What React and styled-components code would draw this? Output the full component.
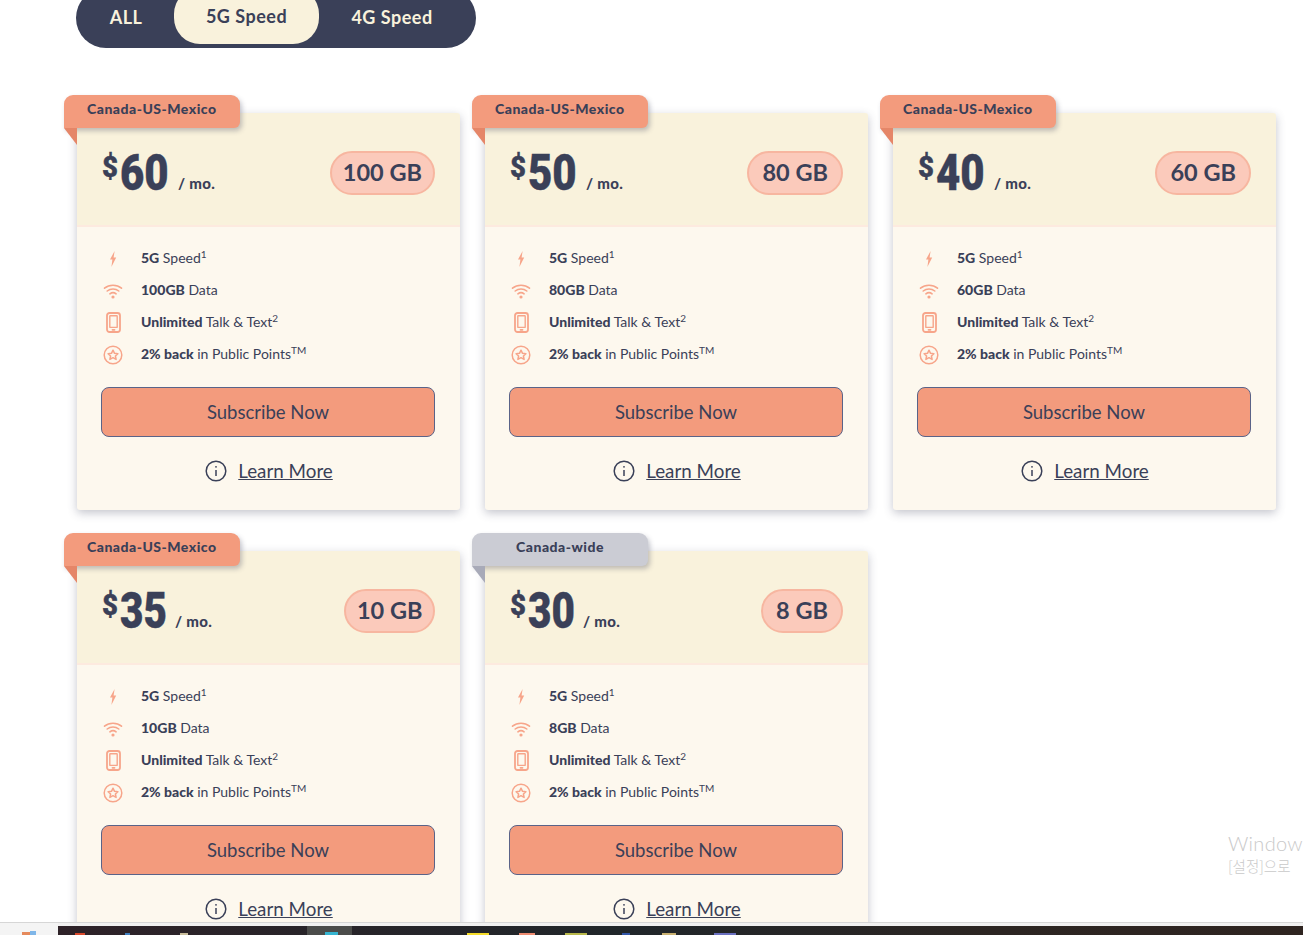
import React from 'react'
import styled, { createGlobalStyle } from 'styled-components'

const navy = '#3a4058'
const salmon = '#f39b7d'
const font = `'Lato', 'Noto Sans', sans-serif`

const GlobalStyle = createGlobalStyle`
  html, body {
    margin: 0;
    padding: 0;
    height: 100%;
    overflow: hidden;
    background: #fff;
  }
  * { box-sizing: border-box; }
`

const Screen = styled.div`
  height: 935px;
  display: flex;
  flex-direction: column;
  font-family: ${font};
  color: ${navy};
  position: relative;
`

const Page = styled.main`
  height: 922px;
  flex: none;
  overflow: hidden;
  padding: 0 0 0 64px;
`

const Tabs = styled.nav`
  width: 400px;
  height: 60px;
  margin: -12px 0 65px 12px;
  padding: 0 0 4px 8px;
  background: ${navy};
  border-radius: 30px;
  display: flex;
  align-items: stretch;
`

const Tab = styled.button`
  width: ${p => p.$width}px;
  padding: ${p => (p.$active ? 0 : 2)}px ${p => p.$shift || 0}px 0 0;
  margin: ${p => (p.$active ? '0 32px 0 0' : '0')};
  border: 0;
  border-radius: 26px;
  background: ${p => (p.$active ? '#f9f2dc' : 'transparent')};
  color: ${p => (p.$active ? navy : '#f9f2dc')};
  font: 700 18px ${font};
  letter-spacing: 0.5px;
  white-space: nowrap;
`

const Grid = styled.div`
  display: grid;
  grid-template-columns: repeat(3, 383px);
  gap: 41px 25px;
  margin-left: 13px;
`

const Card = styled.article`
  position: relative;
  height: 397px;
  background: #fdf8ee;
  border-radius: 3px;
  box-shadow: 0 3px 10px rgba(58, 64, 88, 0.3);
`

const Ribbon = styled.div`
  position: absolute;
  left: -13px;
  top: -18px;
  width: 176px;
  height: 33px;
  background: ${p => (p.$grey ? '#cbccd4' : salmon)};
  border-radius: 9px 9px 6px 0;
  box-shadow: 2px 3px 5px rgba(58, 64, 88, 0.3);
  font-size: 14px;
  font-weight: 900;
  letter-spacing: 0.5px;
  line-height: 28px;
  text-align: ${p => (p.$grey ? 'center' : 'left')};
  padding-left: ${p => (p.$grey ? '0' : '23px')};

  &::after {
    content: '';
    position: absolute;
    left: 0;
    top: 33px;
    border-style: solid;
    border-width: 0 13px 17px 0;
    border-color: transparent;
    border-right-color: ${p => (p.$grey ? '#a8aab8' : '#e58668')};
  }
`

const Head = styled.header`
  height: 114px;
  padding: 38px 25px 0;
  background: #f9f2dc;
  border-bottom: 2px solid #fdeadf;
  border-radius: 3px 3px 0 0;
  display: flex;
  justify-content: space-between;
  align-items: flex-start;
`

const Price = styled.div`
  display: flex;
  align-items: flex-start;
`

const Dollar = styled.span`
  display: inline-block;
  width: 18px;
  margin-top: 1px;
  font-family: 'Roboto', sans-serif;
  font-size: 30px;
  font-weight: 900;
  line-height: 30px;
  transform: scaleX(0.92);
  transform-origin: left;
  -webkit-text-stroke: 0.4px ${navy};
`

const Amount = styled.span`
  display: inline-block;
  font-family: 'Roboto', sans-serif;
  font-size: 50px;
  font-weight: 900;
  line-height: 44px;
  margin-right: -9px;
  transform: scaleX(${p => p.$scale});
  transform-origin: left;
  -webkit-text-stroke: 0.4px ${navy};
`

const Per = styled.span`
  margin: 23px 0 0 ${p => p.$gap}px;
  font-size: 15px;
  font-weight: 900;
  letter-spacing: 0.3px;
`

const Data = styled.div`
  height: 44px;
  padding: 0 ${p => p.$pad}px;
  background: #fbcabb;
  border: 2px solid #f7b6a0;
  border-radius: 22px;
  font-size: 23.5px;
  font-weight: 700;
  line-height: 38px;
`

const Features = styled.ul`
  list-style: none;
  margin: 0;
  padding: 15px 25px 0 24px;
`

const Feature = styled.li`
  height: 32px;
  display: flex;
  align-items: center;
  gap: 16px;
  font-size: 14px;
  color: ${navy};

  b { font-weight: 900; }
  sup { font-size: 10px; line-height: 0; vertical-align: 5px; }
  > span:last-child { margin-top: -2px; }
`

const IconBox = styled.span`
  width: 24px;
  display: flex;
  justify-content: center;
  color: #f7a58a;
  margin-top: 1px;
`

const Subscribe = styled.button`
  display: block;
  width: 334px;
  height: 50px;
  margin: 17px 0 0 24px;
  background: ${salmon};
  border: 1px solid #5a6388;
  border-radius: 8px;
  color: ${navy};
  font: 400 18.5px ${font};
`

const More = styled.div`
  display: flex;
  justify-content: center;
  align-items: center;
  gap: 11px;
  margin-top: 22px;
  padding-left: 1px;
  font-size: 18.8px;

  a { color: ${navy}; text-decoration: underline; }
`

const Watermark = styled.div`
  position: absolute;
  left: 1228px;
  top: 831px;
  color: #c9c9c9;
  font-family: 'Noto Sans CJK KR', sans-serif;
  font-weight: 300;
  white-space: nowrap;
  font-size: 14.5px;
  line-height: 22px;
`

const WatermarkTitle = styled.strong`
  display: block;
  font-family: ${font};
  font-weight: 300;
  font-size: 20px;
  line-height: 24px;
  letter-spacing: 0.3px;
`

const Taskbar = styled.footer`
  height: 13px;
  flex: none;
  display: flex;
  background: #f1f1f1;
  border-top: 1px solid #d6d6d6;
`

const TaskbarStart = styled.div`
  width: 58px;
  background: #f4f4f4;
  display: flex;
  align-items: flex-end;
`

const TaskbarDark = styled.div`
  flex: 1;
  margin-top: 3px;
  background: linear-gradient(90deg, #2e2228, #20262a 45%, #2c2522 75%, #2e2420);
  display: flex;
  align-items: flex-end;
`

const TaskTile = styled.div`
  width: 45px;
  height: 100%;
  margin-left: ${p => p.$left}px;
  background: #4b4c4a;
  display: flex;
  align-items: flex-end;
`

const TaskIcon = styled.span`
  width: ${p => p.$width}px;
  height: ${p => p.$height || 2}px;
  margin-left: ${p => p.$left}px;
  background: ${p => p.$color};
`

const Bolt = () => (
  <svg width="8" height="16" viewBox="0 0 8 16" fill="currentColor">
    <path d="M5.6 0 1 8.6h2.4L2.4 16 7.2 6.600H4.600z" />
  </svg>
)

const Wifi = () => (
  <svg width="20" height="16" viewBox="0 0 20 16" fill="none" stroke="currentColor" strokeWidth="1.600" strokeLinecap="round">
    <path d="M1.500 5.200c4.800-4 12.200-4 17 0M4.200 8c3.300-2.700 8.300-2.700 11.600 0M6.900 10.800c1.800-1.400 4.400-1.400 6.200 0" />
    <circle cx="10" cy="14" r="0.800" fill="currentColor" />
  </svg>
)

const Phone = () => (
  <svg width="15" height="21" viewBox="0 0 15 21" fill="none" stroke="currentColor" strokeWidth="1.800">
    <rect x="1" y="1" width="13" height="19" rx="2.500" />
    <rect x="3.800" y="3.800" width="7.400" height="11.600" rx="0.500" strokeWidth="1.400" />
    <path d="M6.500 17.800h2" strokeLinecap="round" />
  </svg>
)

const Star = () => (
  <svg width="20" height="20" viewBox="0 0 20 20" fill="none" stroke="currentColor" strokeWidth="1.500" strokeLinejoin="round">
    <circle cx="10" cy="10" r="8.800" />
    <path d="m10 5.200 1.500 3.100 3.400.4-2.500 2.300.7 3.400-3.100-1.700-3.100 1.700.7-3.400-2.500-2.300 3.400-.4z" />
  </svg>
)

const Info = () => (
  <svg width="22" height="22" viewBox="0 0 22 22" fill="none" stroke={navy} strokeWidth="1.500">
    <circle cx="11" cy="11" r="9.800" />
    <path d="M11 10v6" />
    <circle cx="11" cy="6.800" r="0.900" fill={navy} stroke="none" />
  </svg>
)

const plans = [
  { price: 60, data: 100, gap: 9, scale: 0.84, pad: 11, zone: 'Canada-US-Mexico' },
  { price: 50, data: 80, gap: 9, scale: 0.84, pad: 13, zone: 'Canada-US-Mexico' },
  { price: 40, data: 60, gap: 9, scale: 0.84, pad: 13, zone: 'Canada-US-Mexico' },
  { price: 35, data: 10, gap: 6, scale: 0.81, pad: 10.5, zone: 'Canada-US-Mexico' },
  { price: 30, data: 8, gap: 6, scale: 0.81, pad: 13, zone: 'Canada-wide', grey: true },
]

const PlanCard = ({ plan }) => (
  <Card>
    <Ribbon $grey={plan.grey}>{plan.zone}</Ribbon>
    <Head>
      <Price>
        <Dollar>$</Dollar>
        <Amount $scale={plan.scale}>{plan.price}</Amount>
        <Per $gap={plan.gap}>/ mo.</Per>
      </Price>
      <Data $pad={plan.pad}>{plan.data} GB</Data>
    </Head>
    <Features>
      <Feature>
        <IconBox><Bolt /></IconBox>
        <span><b>5G</b> Speed<sup>1</sup></span>
      </Feature>
      <Feature>
        <IconBox><Wifi /></IconBox>
        <span><b>{plan.data}GB</b> Data</span>
      </Feature>
      <Feature>
        <IconBox><Phone /></IconBox>
        <span><b>Unlimited</b> Talk &amp; Text<sup>2</sup></span>
      </Feature>
      <Feature>
        <IconBox><Star /></IconBox>
        <span><b>2% back</b> in Public Points<sup>TM</sup></span>
      </Feature>
    </Features>
    <Subscribe>Subscribe Now</Subscribe>
    <More>
      <Info />
      <a href="#more">Learn More</a>
    </More>
  </Card>
)

const App = () => (
  <Screen>
    <GlobalStyle />
    <Page>
      <Tabs>
        <Tab $width={90} $shift={6}>ALL</Tab>
        <Tab $width={145} $active>5G Speed</Tab>
        <Tab $width={82}>4G Speed</Tab>
      </Tabs>
      <Grid>
        {plans.map(plan => <PlanCard key={plan.price} plan={plan} />)}
      </Grid>
    </Page>
    <Watermark>
      <WatermarkTitle>Window</WatermarkTitle>
      [설정]으로
    </Watermark>
    <Taskbar>
      <TaskbarStart>
        <TaskIcon $left={22} $width={8} $height={3} $color="#e58a5c" />
        <TaskIcon $left={0} $width={6} $height={4} $color="#7fb6e8" />
      </TaskbarStart>
      <TaskbarDark>
        <TaskIcon $left={17} $width={10} $color="#d9482b" />
        <TaskIcon $left={40} $width={5} $color="#3f7fbf" />
        <TaskIcon $left={50} $width={8} $color="#c9bd9b" />
        <TaskTile $left={119}>
          <TaskIcon $left={18} $width={13} $height={3} $color="#35b4d0" />
        </TaskTile>
        <TaskIcon $left={115} $width={22} $color="#f5dc2a" />
        <TaskIcon $left={30} $width={16} $color="#ee8b70" />
        <TaskIcon $left={30} $width={22} $color="#b8b84a" />
        <TaskIcon $left={35} $width={8} $color="#3256a8" />
        <TaskIcon $left={32} $width={14} $color="#c8b070" />
        <TaskIcon $left={38} $width={22} $color="#6a70c0" />
      </TaskbarDark>
    </Taskbar>
  </Screen>
)

export default App
